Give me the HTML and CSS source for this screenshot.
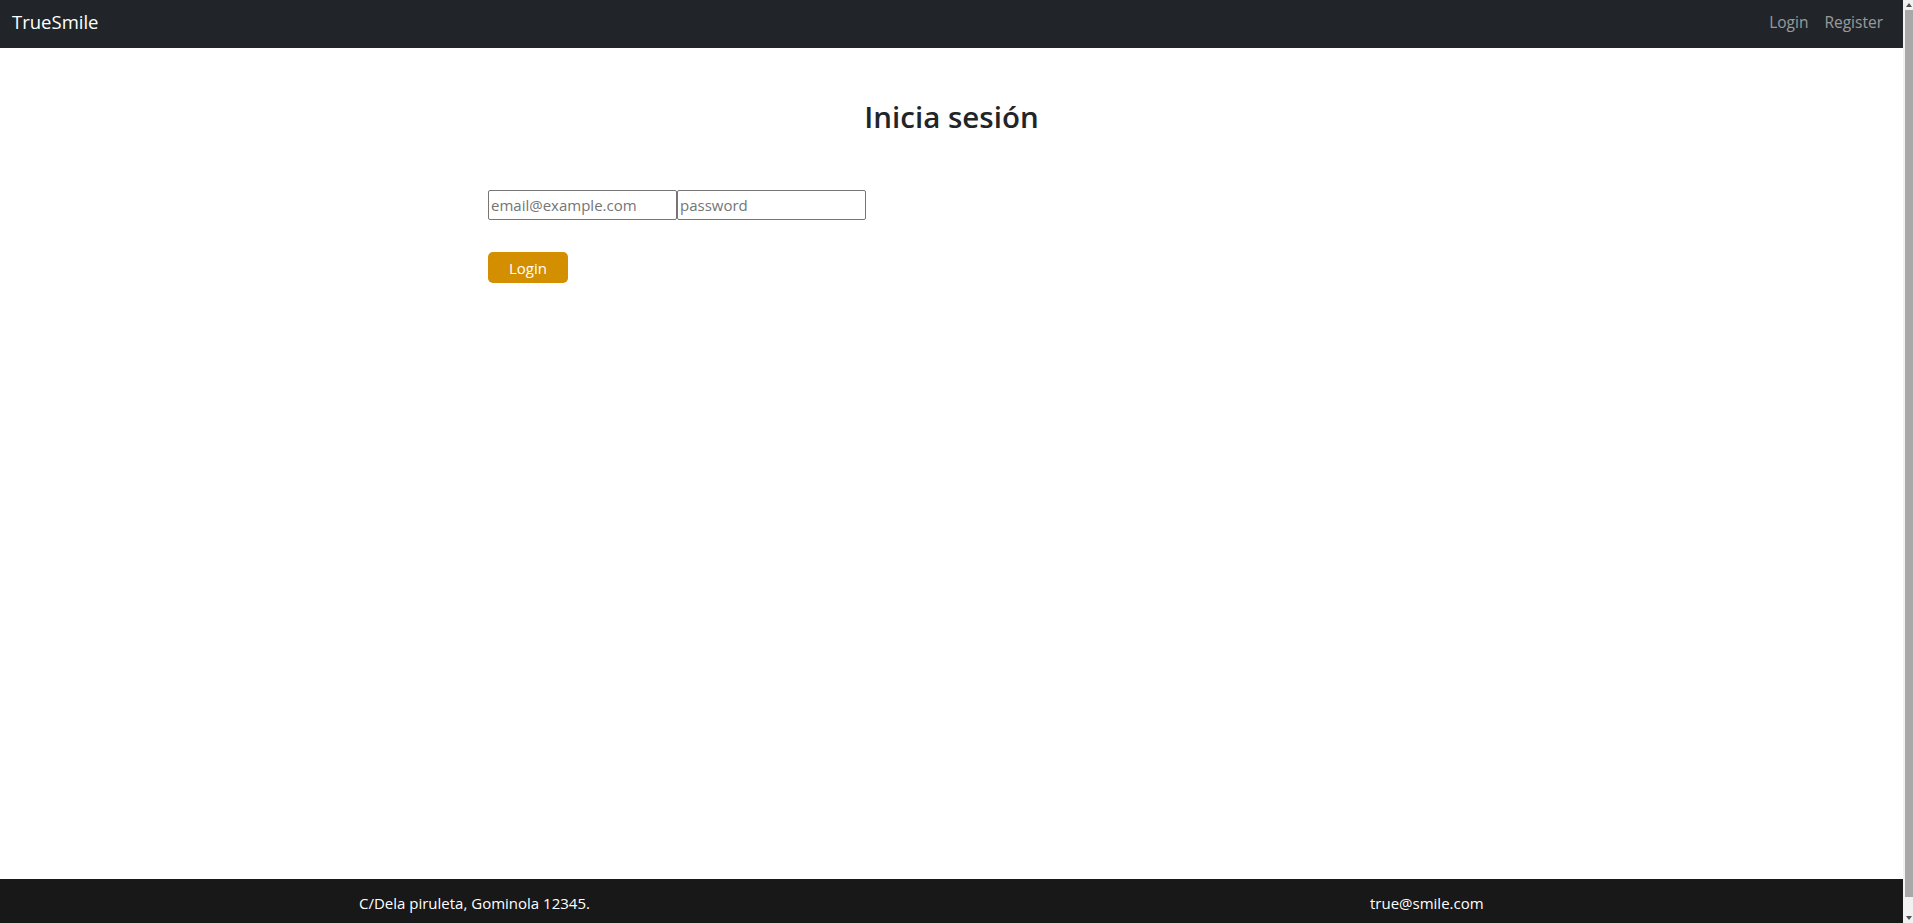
FILE: index.html
```html
<!DOCTYPE html>
<html lang="es">
<head>
<meta charset="utf-8">
<title>TrueSmile</title>
<link rel="stylesheet" href="styles.css">
</head>
<body>
<div class="page">
  <nav class="navbar">
    <a class="brand" href="#">TrueSmile</a>
    <ul class="nav">
      <li><a class="nav-link" href="#">Login</a></li>
      <li><a class="nav-link" href="#">Register</a></li>
    </ul>
  </nav>
  <main class="main">
    <h2 class="title">Inicia sesión</h2>
    <form class="login-form">
      <div class="fields">
        <input class="field" type="email" placeholder="email@example.com">
        <input class="field" type="password" placeholder="password">
      </div>
      <button class="btn-login" type="button">Login</button>
    </form>
  </main>
  <footer class="footer">
    <div class="footer-row">
      <span class="footer-text">C/Dela piruleta, Gominola 12345.</span>
      <span class="footer-text">true@smile.com</span>
    </div>
  </footer>
</div>
<div class="scrollbar" aria-hidden="true">
  <span class="sb-arrow sb-up"></span>
  <span class="sb-thumb"></span>
  <span class="sb-arrow sb-down"></span>
</div>
</body>
</html>
```

FILE: styles.css
```css
html, body {
  margin: 0;
  padding: 0;
}
body {
  font-family: "Open Sans", "Noto Sans", sans-serif;
  font-size: 15px;
  line-height: 24px;
  color: #212529;
  background: #fff;
  overflow-x: hidden;
}
.page {
  display: flex;
  flex-direction: column;
  min-height: 939px;
  margin-right: 10px;
}
.navbar {
  height: 48px;
  background: #212529;
  display: flex;
  align-items: center;
  justify-content: space-between;
  padding: 0 12px;
  box-sizing: border-box;
}
.brand {
  color: #fff;
  text-decoration: none;
  font-size: 18.5px;
  line-height: 30px;
  margin-top: -4px;
}
.nav {
  list-style: none;
  margin: -4px 0 0;
  padding: 0;
  display: flex;
}
.nav-link {
  display: block;
  padding: 8px;
  color: rgba(255, 255, 255, 0.55);
  text-decoration: none;
  font-size: 15.5px;
  line-height: 24px;
}
.main {
  flex: 1;
  display: flex;
  flex-direction: column;
}
.title {
  margin: 50px 0 0;
  text-align: center;
  font-size: 29.5px;
  font-weight: 600;
  line-height: 38px;
}
.login-form {
  display: flex;
  flex-direction: column;
  align-items: flex-start;
  gap: 32px;
  margin: 54px 0 0 488px;
}
.fields {
  display: flex;
}
.field {
  width: 189px;
  height: 30px;
  box-sizing: border-box;
  border: 1px solid #767676;
  border-radius: 2px;
  padding: 1px 2px;
  font-family: inherit;
  font-size: 15px;
  color: #212529;
  margin: 0;
}
.field::placeholder {
  color: #757575;
}
.btn-login {
  width: 80px;
  height: 31px;
  border: 0;
  border-radius: 5px;
  background: #d48f00;
  color: #fff;
  font-family: inherit;
  font-size: 15px;
  padding: 0;
  cursor: pointer;
}
.footer {
  background: #181818;
  color: #fff;
  height: 60px;
}
.footer-row {
  display: grid;
  grid-template-columns: 1011px auto;
  padding: 12px 0 0 359px;
}
.footer-text {
  font-size: 15px;
  line-height: 24px;
}
.scrollbar {
  position: fixed;
  top: 0;
  right: 0;
  bottom: 0;
  width: 10px;
  background: #f1f1f1;
  display: flex;
  flex-direction: column;
  align-items: flex-end;
}
.sb-arrow {
  width: 0;
  height: 0;
  border-left: 3px solid transparent;
  border-right: 3px solid transparent;
  margin: 3px 1px 3px 0;
}
.sb-up {
  border-bottom: 4px solid #505050;
}
.sb-down {
  border-top: 4px solid #505050;
}
.sb-thumb {
  flex: 1;
  width: 8px;
  margin: 0 0 16px;
  background: #a8a8a8;
}
```
